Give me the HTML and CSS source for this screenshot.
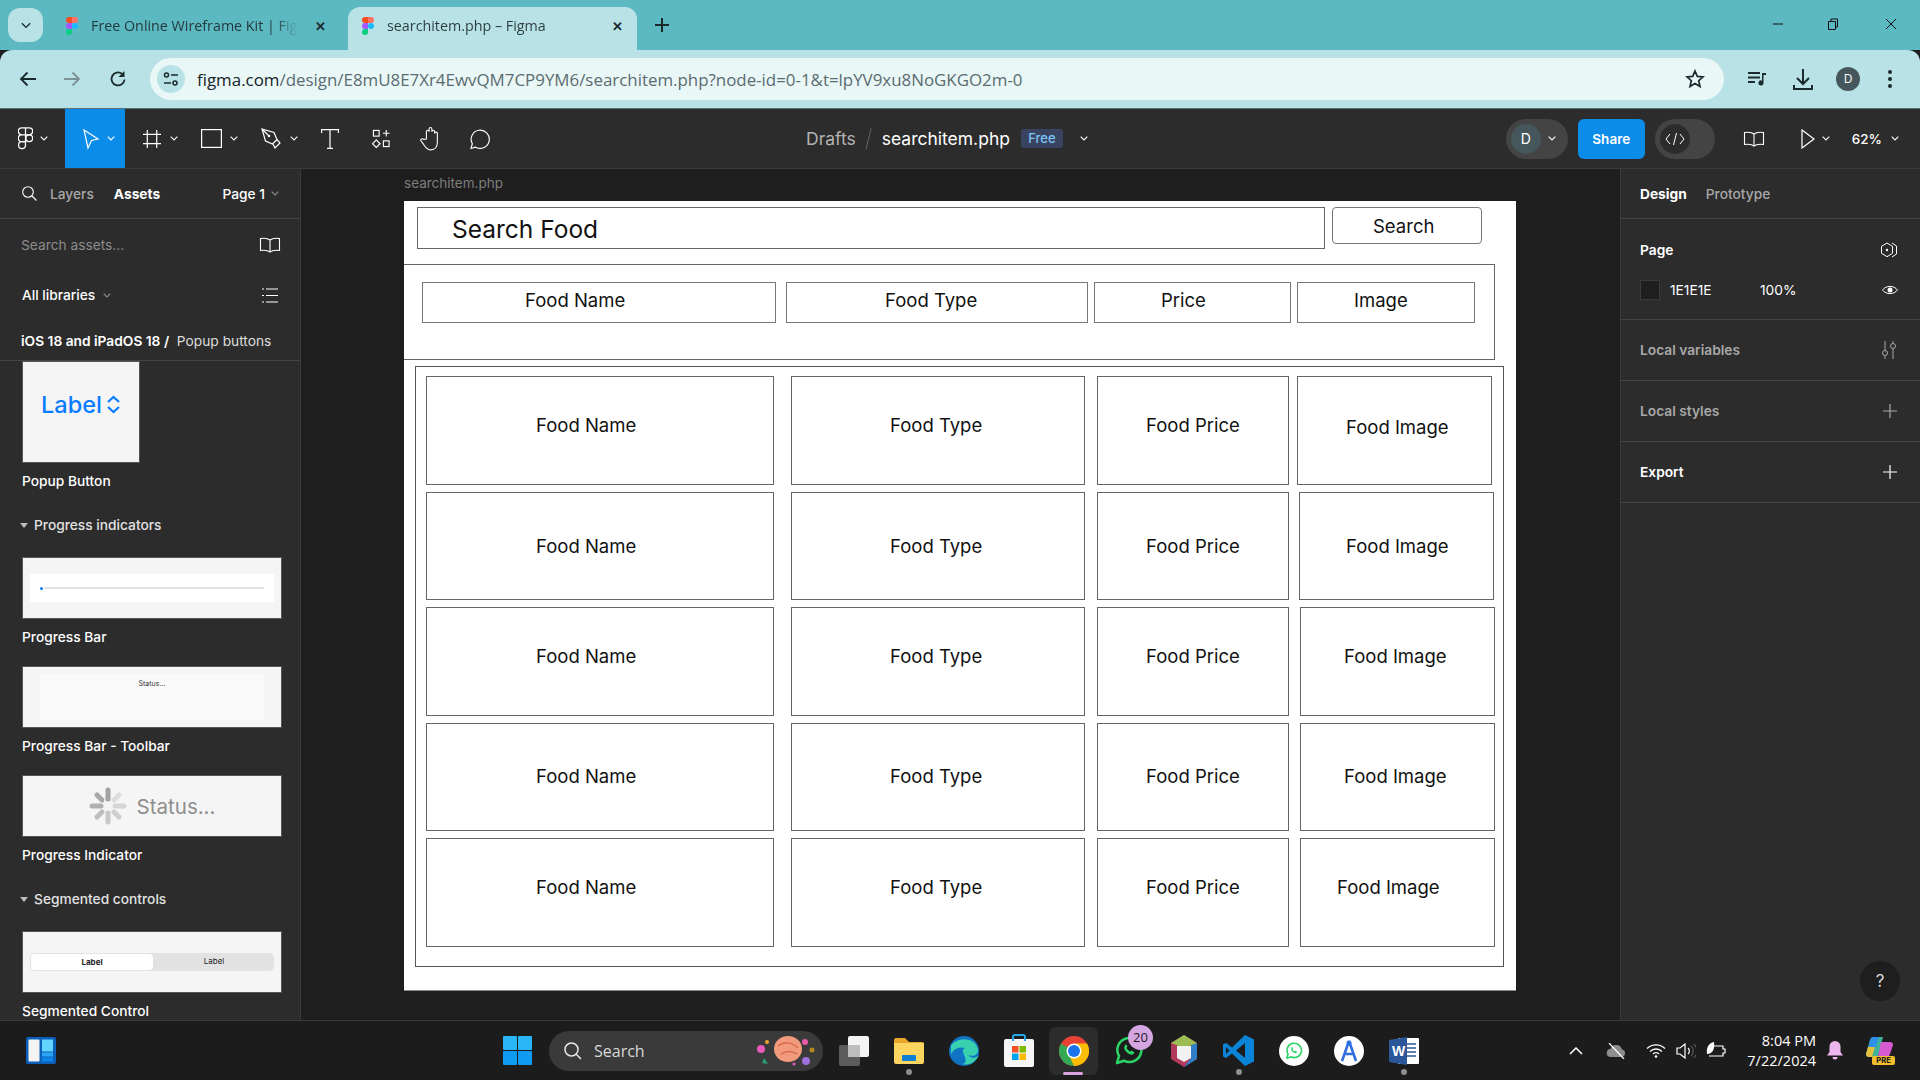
FILE: index.html
```html
<!DOCTYPE html>
<html lang="en">
<head>
    <meta charset="UTF-8">
    <title>searchitem.php – Figma</title>
    <link rel="stylesheet" href="styles.css">
</head>
<body>
    <svg class="sprites" width="0" height="0">
        <symbol id="figma" viewBox="0 0 12 18">
            <path fill="#f24e1e" d="M6 0H3a3 3 0 0 0 0 6h3z"/>
            <path fill="#ff7262" d="M6 0h3a3 3 0 0 1 0 6H6z"/>
            <path fill="#a259ff" d="M6 6H3a3 3 0 0 0 0 6h3z"/>
            <circle fill="#1abcfe" cx="9" cy="9" r="3"/>
            <path fill="#0acf83" d="M6 12H3a3 3 0 1 0 3 3z"/>
        </symbol>
        <symbol id="chev" viewBox="0 0 8 5">
            <path d="M.7.7 4 4 7.3.7" fill="none" stroke="currentColor" stroke-width="1.1"/>
        </symbol>
        <symbol id="book" viewBox="0 0 22 16">
            <path d="M11 3C9 1.3 5.5 1 1.5 1.5v12c4-.5 7.5-.2 9.5 1.500 2-1.700 5.500-2 9.500-1.500v-12C16.500 1 13 1.300 11 3zm0 0v12" fill="none" stroke="currentColor" stroke-width="1.100"/>
        </symbol>
        <symbol id="plus" viewBox="0 0 14 14">
            <path d="M7 0v14M0 7h14" fill="none" stroke="currentColor" stroke-width="1.200"/>
        </symbol>
        <symbol id="wa" viewBox="0 0 30 30">
            <path d="M3 27l2-7a12 12 0 1 1 5 4.700z" fill="none" stroke="currentColor" stroke-width="2.600" stroke-linejoin="round"/>
            <path d="M11 9.500c-1.500 1.500-1 4 1.500 6.500s5.500 3.500 7 2l1-1.500-3-2-1.300 1c-1.500-.5-3-2-3.700-3.700l1-1.300-1.700-2.500z" fill="currentColor"/>
        </symbol>
    </svg>

    <!-- Browser tabs -->
    <div class="tabbar">
        <div class="tab-search">
            <svg width="10" height="7"><use href="#chev"/></svg>
        </div>
        <div class="tab tab-first">
            <svg class="favicon" width="12" height="18"><use href="#figma"/></svg>
            <span class="tab-title tab-fade">Free Online Wireframe Kit | Fig</span>
            <span class="tab-close">✕</span>
        </div>
        <div class="tab tab-active">
            <svg class="favicon" width="12" height="18"><use href="#figma"/></svg>
            <span class="tab-title">searchitem.php – Figma</span>
            <span class="tab-close">✕</span>
        </div>
        <svg class="new-tab" width="14" height="14" viewBox="0 0 14 14"><path d="M7 0v14M0 7h14" stroke="#1b2a2c" stroke-width="2"/></svg>
        <div class="win-controls">
            <svg width="12" height="12" viewBox="0 0 12 12"><path d="M1 6h10" stroke="#111" stroke-width="1"/></svg>
            <svg class="win-restore" width="12" height="12" viewBox="0 0 12 12"><path d="M1.500 3.500h7v8h-7zM4 3.500V1h6.500v8H8.500" fill="none" stroke="#111"/></svg>
            <svg width="12" height="12" viewBox="0 0 12 12"><path d="M1 1l10 10M11 1 1 11" stroke="#111"/></svg>
        </div>
    </div>

    <!-- Address bar -->
    <div class="navbar">
        <svg class="nav-icon" width="18" height="16" viewBox="0 0 18 16"><path d="M17 8H2M8.500 1.500 2 8l6.500 6.500" fill="none" stroke="#1b2a2c" stroke-width="1.800"/></svg>
        <svg class="nav-icon nav-forward" width="18" height="16" viewBox="0 0 18 16"><path d="M1 8h15M9.500 1.500 16 8l-6.500 6.500" fill="none" stroke="#7d9295" stroke-width="1.800"/></svg>
        <svg class="nav-icon nav-reload" width="18" height="18" viewBox="0 0 18 18"><path d="M15.500 9.500A6.500 6.500 0 1 1 13 3.800" fill="none" stroke="#1b2a2c" stroke-width="1.800"/><path d="M15.500 1v6h-6z" fill="#1b2a2c"/></svg>
        <div class="urlbar">
            <span class="site-info">
                <svg width="16" height="16" viewBox="0 0 16 16"><g fill="none" stroke="#1b2a2c" stroke-width="1.500"><circle cx="3.500" cy="4" r="2"/><path d="M8 4h7M1 12h7"/><circle cx="12" cy="12" r="2"/></g></svg>
            </span>
            <span class="url"><span class="url-host">figma.com</span>/design/E8mU8E7Xr4EwvQM7CP9YM6/searchitem.php?node-id=0-1&amp;t=lpYV9xu8NoGKGO2m-0</span>
            <svg class="star" width="20" height="20" viewBox="0 0 20 20"><path d="M10 2l2.300 5.400 5.700.5-4.300 3.800 1.300 5.800-5-3-5 3 1.300-5.800L2 7.900l5.700-.5z" fill="none" stroke="#1b2a2c" stroke-width="1.700"/></svg>
        </div>
        <div class="nav-right">
            <svg width="20" height="18" viewBox="0 0 20 18"><path d="M1 3h12M1 7.500h12M1 12h7" stroke="#1b2a2c" stroke-width="2"/><path d="M15 3h4v2h-2.500v8a2.500 2.500 0 1 1-1.500-2.300z" fill="#1b2a2c"/></svg>
            <svg width="20" height="22" viewBox="0 0 20 22"><path d="M10 1v14M4 10l6 6 6-6M1 17v4h18v-4" fill="none" stroke="#1b2a2c" stroke-width="2"/></svg>
            <span class="chrome-avatar">D</span>
            <svg width="4" height="18" viewBox="0 0 4 18"><g fill="#1b2a2c"><circle cx="2" cy="2" r="2"/><circle cx="2" cy="9" r="2"/><circle cx="2" cy="16" r="2"/></g></svg>
        </div>
    </div>

    <!-- Figma toolbar -->
    <div class="toolbar">
        <div class="tools">
            <div class="tool tool-logo">
                <svg width="15" height="23" viewBox="0 0 12 18"><g fill="none" stroke="#fff" stroke-width="1"><path d="M6 .5H3a2.700 2.700 0 0 0 0 5.500h3zM6 .5h3a2.700 2.700 0 0 1 0 5.500H6zM6 6H3a2.700 2.700 0 0 0 0 5.500h3z"/><circle cx="9" cy="8.800" r="2.700"/><path d="M6 11.500H3A2.800 2.800 0 1 0 6 14.500z"/></g></svg>
                <svg class="caret" width="8" height="5"><use href="#chev"/></svg>
            </div>
            <div class="tool tool-move">
                <svg width="18" height="22" viewBox="0 0 18 22"><path d="M2 2l14 9-6.500 1.500L6 20z" fill="none" stroke="#fff" stroke-width="1.200"/></svg>
                <svg class="caret" width="8" height="5"><use href="#chev"/></svg>
            </div>
            <div class="tool tool-frame">
                <svg width="18" height="18" viewBox="0 0 21 21"><path d="M5 0v21M16 0v21M0 5h21M0 16h21" stroke="#fff" stroke-width="1.400"/></svg>
                <svg class="caret" width="8" height="5"><use href="#chev"/></svg>
            </div>
            <div class="tool tool-rect">
                <svg width="21" height="19" viewBox="0 0 21 19"><rect x=".6" y=".6" width="19.800" height="17.800" fill="none" stroke="#fff" stroke-width="1.200"/></svg>
                <svg class="caret" width="8" height="5"><use href="#chev"/></svg>
            </div>
            <div class="tool tool-pen">
                <svg width="20" height="21" viewBox="0 0 20 21"><path d="M1 1l12 3.500 3 7-4.500 4.500-7-3zM1 1l6.500 6.500M12 16l2 4 5-5-3-3.500" fill="none" stroke="#fff" stroke-width="1.200"/><circle cx="8" cy="8" r="1.300" fill="#fff"/></svg>
                <svg class="caret" width="8" height="5"><use href="#chev"/></svg>
            </div>
            <div class="tool tool-text">
                <svg width="18" height="20" viewBox="0 0 18 20"><path d="M.6 4V.7h16.800V4M9 .7v18.600M6 19.300h6" fill="none" stroke="#fff" stroke-width="1.200"/></svg>
            </div>
            <div class="tool tool-comps">
                <svg width="19" height="19" viewBox="0 0 20 20"><g fill="none" stroke="#fff" stroke-width="1.200"><rect x="1.500" y="1.500" width="6" height="6"/><path d="M15 1v7M11.500 4.500h7"/><path d="M4.500 11.500l4 4-4 4-4-4z"/><rect x="12" y="12.500" width="6" height="6"/></g></svg>
            </div>
            <div class="tool tool-hand">
                <svg width="21" height="25" viewBox="0 0 23 27"><path d="M7 14V6a1.500 1.500 0 0 1 3 0V3a1.500 1.500 0 0 1 3 0v3a1.500 1.500 0 0 1 3 0v2a1.500 1.500 0 0 1 3 0v10c0 5-3 8-7 8-4.500 0-6-3-8-6l-3-4c-1-2 1.500-3 3-1.500z" fill="none" stroke="#fff" stroke-width="1.200"/></svg>
            </div>
            <div class="tool tool-comment">
                <svg width="22" height="22" viewBox="0 0 23 23"><path d="M2 21.500l1.500-5A9.500 9.500 0 1 1 7 20z" fill="none" stroke="#fff" stroke-width="1.200" stroke-linejoin="round"/></svg>
            </div>
        </div>
        <div class="file-title">
            <span class="crumb">Drafts</span>
            <span class="crumb-slash"></span>
            <span class="file-name">searchitem.php</span>
            <span class="badge-free">Free</span>
            <svg class="caret" width="8" height="5"><use href="#chev"/></svg>
        </div>
        <div class="actions">
            <div class="pill pill-user">
                <span class="user-dot">D</span>
                <svg class="caret" width="8" height="5"><use href="#chev"/></svg>
            </div>
            <button class="share">Share</button>
            <div class="pill pill-code">
                <span class="code-dot">
                    <svg width="20" height="12" viewBox="0 0 20 12"><path d="M5 1 1 6l4 5M15 1l4 5-4 5M11.500 0 8.500 12" fill="none" stroke="#fff"/></svg>
                </span>
            </div>
            <svg class="top-book" width="22" height="16"><use href="#book"/></svg>
            <svg class="top-play" width="14" height="20" viewBox="0 0 14 20"><path d="M1 1l12 9-12 9z" fill="none" stroke="#fff" stroke-width="1.200"/></svg>
            <svg class="caret play-caret" width="8" height="5"><use href="#chev"/></svg>
            <span class="zoom-level">62%</span>
            <svg class="caret" width="8" height="5"><use href="#chev"/></svg>
        </div>
    </div>

    <div class="workspace">
        <!-- Assets panel -->
        <aside class="left-panel">
            <div class="panel-tabs">
                <svg class="find" width="15" height="15" viewBox="0 0 15 15"><path d="M6 .7a5.300 5.300 0 1 0 0 10.600A5.300 5.300 0 0 0 6 .7zM10 10l4.500 4.500" fill="none" stroke="#fff" stroke-width="1.100"/></svg>
                <span class="tab-muted">Layers</span>
                <span class="tab-strong">Assets</span>
                <span class="page-pick">Page 1</span>
                <svg class="caret caret-dim" width="8" height="5"><use href="#chev"/></svg>
            </div>
            <div class="asset-search">
                <span>Search assets...</span>
                <svg width="22" height="16"><use href="#book"/></svg>
            </div>
            <div class="lib-row">
                <span>All libraries</span>
                <svg class="caret caret-dim" width="8" height="5"><use href="#chev"/></svg>
                <svg class="list-icon" width="16" height="15" viewBox="0 0 16 15"><path d="M0 1h2M4 1h12M0 7.500h2M4 7.500h12M0 14h2M4 14h12" stroke="#fff" stroke-width="1"/></svg>
            </div>
            <div class="breadcrumb"><b>iOS 18 and iPadOS 18 /</b>&nbsp; Popup buttons</div>
            <div class="asset-list">
                <div class="thumb thumb-popup">
                    <span>Label</span>
                    <svg width="15" height="19" viewBox="0 0 15 19"><path d="M2 7l5.500-5L13 7M2 12l5.500 5 5.500-5" fill="none" stroke="#0a7cff" stroke-width="2.200"/></svg>
                </div>
                <div class="asset-name name-popup">Popup Button</div>
                <div class="group-name">Progress indicators</div>
                <div class="thumb thumb-bar">
                    <div class="bar-inner"><span class="bar-dot"></span><span class="bar-line"></span></div>
                </div>
                <div class="asset-name">Progress Bar</div>
                <div class="thumb thumb-toolbar">
                    <div class="toolbar-inner">Status...</div>
                </div>
                <div class="asset-name">Progress Bar - Toolbar</div>
                <div class="thumb thumb-status">
                    <svg width="38" height="38" viewBox="0 0 38 38">
                        <g stroke-width="5" stroke-linecap="round">
                            <path stroke="#a3a3a3" d="M19 3v9"/>
                            <path stroke="#dcdcdc" d="M30 8l-5 5"/>
                            <path stroke="#d6d6d6" d="M35 19h-9"/>
                            <path stroke="#cfcfcf" d="M30 30l-5-5"/>
                            <path stroke="#c8c8c8" d="M19 35v-9"/>
                            <path stroke="#bdbdbd" d="M8 30l5-5"/>
                            <path stroke="#b0b0b0" d="M3 19h9"/>
                            <path stroke="#a8a8a8" d="M8 8l5 5"/>
                        </g>
                    </svg>
                    <span>Status...</span>
                </div>
                <div class="asset-name">Progress Indicator</div>
                <div class="group-name group-segmented">Segmented controls</div>
                <div class="thumb thumb-segment">
                    <div class="segment-track">
                        <span class="segment-on">Label</span>
                        <span class="segment-off">Label</span>
                    </div>
                </div>
                <div class="asset-name">Segmented Control</div>
            </div>
        </aside>

        <!-- Canvas with the wireframe -->
        <main class="canvas">
            <div class="frame-label">searchitem.php</div>
            <div class="frame">
                <div class="search-row">
                    <div class="search-input">Search Food</div>
                    <div class="search-btn">Search</div>
                </div>
                <div class="head-box">
                    <div class="head-cell head-name">Food Name</div>
                    <div class="head-cell head-type">Food Type</div>
                    <div class="head-cell head-price">Price</div>
                    <div class="head-cell head-image">Image</div>
                </div>
                <div class="grid-box">
                    <div class="food-row row-a">
                        <div class="cell cell-name">Food Name</div>
                        <div class="cell cell-type">Food Type</div>
                        <div class="cell cell-price">Food Price</div>
                        <div class="cell cell-image">Food Image</div>
                    </div>
                    <div class="food-row row-b">
                        <div class="cell cell-name">Food Name</div>
                        <div class="cell cell-type">Food Type</div>
                        <div class="cell cell-price">Food Price</div>
                        <div class="cell cell-image">Food Image</div>
                    </div>
                    <div class="food-row row-c">
                        <div class="cell cell-name">Food Name</div>
                        <div class="cell cell-type">Food Type</div>
                        <div class="cell cell-price">Food Price</div>
                        <div class="cell cell-image">Food Image</div>
                    </div>
                    <div class="food-row row-d">
                        <div class="cell cell-name">Food Name</div>
                        <div class="cell cell-type">Food Type</div>
                        <div class="cell cell-price">Food Price</div>
                        <div class="cell cell-image">Food Image</div>
                    </div>
                    <div class="food-row row-e">
                        <div class="cell cell-name">Food Name</div>
                        <div class="cell cell-type">Food Type</div>
                        <div class="cell cell-price">Food Price</div>
                        <div class="cell cell-image">Food Image</div>
                    </div>
                </div>
            </div>
        </main>

        <!-- Design panel -->
        <aside class="right-panel">
            <div class="panel-tabs right-tabs">
                <span class="tab-strong">Design</span>
                <span class="tab-muted">Prototype</span>
            </div>
            <section class="prop-page">
                <div class="prop-head">
                    <span class="prop-title">Page</span>
                    <svg width="18" height="16" viewBox="0 0 18 16"><path d="M7 1l5.500 3.300v7L7 14.700 1.500 11.300v-7zM12 1l4.500 3v8L12 15" fill="none" stroke="#fff"/><circle cx="7" cy="8" r="1.200" fill="#fff"/></svg>
                </div>
                <div class="fill-row">
                    <span class="swatch"></span>
                    <span class="fill-hex">1E1E1E</span>
                    <span class="fill-pct">100%</span>
                    <svg width="16" height="10" viewBox="0 0 16 10"><path d="M.5 5C4 .2 12 .2 15.500 5 12 9.800 4 9.800.5 5z" fill="none" stroke="#fff"/><circle cx="8" cy="5" r="2.500" fill="#fff"/></svg>
                </div>
            </section>
            <section class="prop-row">
                <span class="prop-title title-dim">Local variables</span>
                <svg class="icon-dim" width="16" height="18" viewBox="0 0 16 18"><g fill="none" stroke="currentColor"><path d="M4 0v9.500M4 15v3M12 0v2M12 8v10"/><circle cx="4" cy="12" r="2.500"/><circle cx="12" cy="5" r="2.500"/></g></svg>
            </section>
            <section class="prop-row">
                <span class="prop-title title-dim">Local styles</span>
                <svg class="icon-dim" width="14" height="14"><use href="#plus"/></svg>
            </section>
            <section class="prop-row">
                <span class="prop-title">Export</span>
                <svg width="14" height="14"><use href="#plus"/></svg>
            </section>
            <div class="help">?</div>
        </aside>
    </div>

    <!-- Windows taskbar -->
    <footer class="taskbar">
        <svg class="widgets" width="30" height="27" viewBox="0 0 30 27"><rect width="30" height="27" rx="2" fill="#0c5fb8"/><rect x="2.500" y="2.500" width="11" height="22" rx="1" fill="#f4f4f4"/><rect x="16" y="2.500" width="11" height="12" fill="#62d2ff"/><rect x="16" y="15.500" width="11" height="4" fill="#2aa6f5"/><rect x="16" y="20.500" width="11" height="4" fill="#0d84ea"/></svg>
        <div class="task-center">
            <svg class="win-logo" width="29" height="29" viewBox="0 0 29 29"><g fill="#29b6f6"><rect width="14" height="14" rx="1"/><rect x="15" width="14" height="14" rx="1"/></g><g fill="#0f9bf0"><rect y="15" width="14" height="14" rx="1"/><rect x="15" y="15" width="14" height="14" rx="1"/></g></svg>
            <div class="task-search">
                <svg width="18" height="18" viewBox="0 0 18 18"><path d="M7.500 1a6.500 6.500 0 1 0 0 13 6.500 6.500 0 0 0 0-13zM12 12l5 5" fill="none" stroke="#e8e8e8" stroke-width="1.500"/></svg>
                <span>Search</span>
                <svg class="brain" width="66" height="34" viewBox="0 0 66 34">
                    <circle cx="7" cy="15" r="4" fill="#e55ab8"/><circle cx="13" cy="8" r="2" fill="#f0a030"/>
                    <path d="M10 24l4 6-6-1z" fill="#2c9c7c"/>
                    <ellipse cx="34" cy="15" rx="14" ry="13" fill="#f19b7c"/><path d="M24 12c6-5 14-4 20 2M27 20c5-3 11-3 16 0" fill="none" stroke="#d8694f" stroke-width="1.500"/>
                    <circle cx="51" cy="8" r="3" fill="#e85aa8"/><circle cx="58" cy="16" r="2.500" fill="#b38a20"/><circle cx="52" cy="27" r="4" fill="#a070e0"/><circle cx="40" cy="30" r="1.500" fill="#e55ab8"/>
                </svg>
            </div>
            <svg class="app app-view" width="30" height="30" viewBox="0 0 30 30"><rect x="9" y="0" width="21" height="21" rx="2" fill="#f4f4f4"/><rect x="0" y="9" width="21" height="21" rx="2" fill="#5c5c5c"/><rect x="9" y="9" width="12" height="12" fill="#bdbdbd"/></svg>
            <div class="app-slot has-dot">
                <svg width="30" height="26" viewBox="0 0 30 26"><path d="M0 2a2 2 0 0 1 2-2h9l4 4h13a2 2 0 0 1 2 2v2H0z" fill="#e8a72a"/><path d="M0 5h30v19a2 2 0 0 1-2 2H2a2 2 0 0 1-2-2z" fill="#fcd660"/><rect x="8" y="17" width="14" height="6" rx="1" fill="#0f7fd6"/></svg>
            </div>
            <div class="app-slot">
                <svg width="30" height="30" viewBox="0 0 30 30"><circle cx="15" cy="15" r="15" fill="#1173c4"/><path d="M2 10C6 2 25-1 29 13c1 6-5 8-10 6 3 3 7 4 11 0-3 7-10 11-16 9C22 24 9 15 16 12 9 10 4 14 2 18z" fill="#39d0b0"/></svg>
            </div>
            <div class="app-slot">
                <svg width="30" height="33" viewBox="0 0 30 33"><rect y="5" width="30" height="28" rx="2" fill="#f6f6f6"/><path d="M9 7V3a2 2 0 0 1 2-2h8a2 2 0 0 1 2 2v4" fill="none" stroke="#25a8e8" stroke-width="2"/><rect x="8" y="12" width="6.500" height="6.500" fill="#f25022"/><rect x="15.500" y="12" width="6.500" height="6.500" fill="#7fba00"/><rect x="8" y="19.500" width="6.500" height="6.500" fill="#00a4ef"/><rect x="15.500" y="19.500" width="6.500" height="6.500" fill="#ffb900"/></svg>
            </div>
            <div class="app-slot app-chrome">
                <svg width="30" height="30" viewBox="0 0 30 30"><circle cx="15" cy="15" r="15" fill="#e94235"/><path d="M15 15 2 7.500A15 15 0 0 0 15 30l7-12z" fill="#34a853"/><path d="M15 15l-7 0L15 30A15 15 0 0 0 28 7.500H15z" fill="#fbbc04"/><circle cx="15" cy="15" r="7.500" fill="#fff"/><circle cx="15" cy="15" r="6" fill="#1a73e8"/></svg>
                <span class="chrome-line"></span>
            </div>
            <div class="app-slot app-wa">
                <svg width="30" height="30" class="wa-green"><use href="#wa"/></svg>
                <span class="wa-badge">20</span>
            </div>
            <div class="app-slot">
                <svg width="26" height="32" viewBox="0 0 26 32"><path d="M13 0 26 8v16l-13 8L0 24V8z" fill="#b23a5a"/><path d="M13 32 26 24V8l-6 2v13z" fill="#2f7fc8"/><path d="M13 0 26 8 13 13 0 8z" fill="#9cbc54"/><path d="M6 11h14v12l-7 4-7-4z" fill="#f2f2f2"/></svg>
            </div>
            <div class="app-slot has-dot">
                <svg width="31" height="31" viewBox="0 0 31 31"><path d="M22 0l9 4.500v22L22 31 9 18.500l-6 4.500-3-1.500v-12L3 8l6 4.500z" fill="#0a84d6"/><path d="M22 8 13 15.500 22 23z" fill="#1c1c1c"/><path d="M3 12v7l3.500-3.500z" fill="#1c1c1c"/></svg>
            </div>
            <div class="app-slot">
                <svg width="30" height="30" viewBox="0 0 30 30"><circle cx="15" cy="15" r="15" fill="#fff"/><svg x="6" y="6" width="18" height="18" class="wa-green"><use href="#wa"/></svg></svg>
            </div>
            <div class="app-slot">
                <svg width="30" height="30" viewBox="0 0 30 30"><circle cx="15" cy="15" r="15" fill="#fff"/><path d="M15 5 8 25M15 5l7 20M10 18h10" fill="none" stroke="#2f6fde" stroke-width="2.600"/><circle cx="15" cy="7" r="2.500" fill="#2f6fde"/></svg>
            </div>
            <div class="app-slot has-dot">
                <svg width="30" height="30" viewBox="0 0 30 30"><rect x="9" y="2" width="21" height="26" rx="1" fill="#fff"/><path d="M18 8h9M18 12h9M18 16h9M18 20h9" stroke="#2b579a" stroke-width="1.500"/><path d="M0 4l18-3v28L0 26z" fill="#2b579a"/><text x="3" y="20" class="word-w">W</text></svg>
            </div>
        </div>
        <div class="tray">
            <svg width="14" height="8" viewBox="0 0 14 8"><path d="M1 7l6-6 6 6" fill="none" stroke="#fff" stroke-width="1.500"/></svg>
            <svg class="tray-cloud" width="20" height="16" viewBox="0 0 20 16"><path d="M5 14a4 4 0 0 1-.5-8A6 6 0 0 1 16 6.500 3.800 3.800 0 0 1 15.500 14z" fill="#8e8e8e"/><path d="M3 0l15 16" stroke="#fff" stroke-width="1.200"/></svg>
            <svg class="tray-wifi" width="20" height="15" viewBox="0 0 20 15"><g fill="none" stroke="#fff" stroke-width="1.300"><path d="M1 5.500a13 13 0 0 1 18 0M4 8.500a8.500 8.500 0 0 1 12 0M7 11a4 4 0 0 1 6 0"/></g><circle cx="10" cy="13.500" r="1.300" fill="#fff"/></svg>
            <svg class="tray-vol" width="20" height="16" viewBox="0 0 20 16"><path d="M1 5h3l5-4v14l-5-4H1z" fill="none" stroke="#fff" stroke-width="1.200"/><path d="M12 5a4 4 0 0 1 0 6" fill="none" stroke="#fff" stroke-width="1.200"/><path d="M15 2.500a8 8 0 0 1 0 11M18 1a10 10 0 0 1 0 14" fill="none" stroke="#666"/></svg>
            <svg class="tray-batt" width="20" height="18" viewBox="0 0 20 18"><path d="M7 4h10v3h2v4h-2v3H3" fill="none" stroke="#fff" stroke-width="1.200"/><path d="M8 0C3 1 0 5 1 12c5 0 8-4 7-12z" fill="#fff"/></svg>
            <div class="clock"><span>8:04 PM</span><span>7/22/2024</span></div>
            <svg class="tray-bell" width="16" height="19" viewBox="0 0 16 19"><path d="M8 0a5.500 5.500 0 0 1 5.500 5.500V11l2.500 3.500H0L2.500 11V5.500A5.500 5.500 0 0 1 8 0z" fill="#edb6ee"/><path d="M5.500 16h5a2.500 2.500 0 0 1-5 0z" fill="#edb6ee"/></svg>
            <div class="copilot">
                <svg width="28" height="20" viewBox="0 0 28 20"><path d="M7 0h10l-5 20H3a3 3 0 0 1-3-3l4-14a4 4 0 0 1 3-3z" fill="#3fb39a"/><path d="M2 12 4 3a4 4 0 0 1 3-3h6L9 12z" fill="#2f8fe8"/><path d="M15 5h9a3 3 0 0 1 3 3l-3 9a4 4 0 0 1-4 3h-8z" fill="#d85ad0"/><path d="M0 17 2 10h7l-3 10H3a3 3 0 0 1-3-3z" fill="#e4c13c"/></svg>
                <span>PRE</span>
            </div>
        </div>
    </footer>
</body>
</html>
```

FILE: styles.css
```css
/* General */
* {
    box-sizing: border-box;
}

html, body {
    margin: 0;
    height: 1080px;
    overflow: hidden;
}

body {
    width: 1920px;
    display: flex;
    flex-direction: column;
    font-family: 'Inter', sans-serif;
    background-color: #1e1e1e;
    color: #fff;
}

.sprites {
    position: absolute;
}

svg {
    flex-shrink: 0;
    display: block;
}

/* Browser tabs */
.tabbar {
    height: 50px;
    display: flex;
    align-items: flex-end;
    background-color: #5cb8c1;
    font-family: 'Open Sans', sans-serif;
    color: #1c2b2e;
}

.tab-search {
    width: 35px;
    height: 34px;
    margin: 0 13px 8px 8px;
    display: flex;
    align-items: center;
    justify-content: center;
    border-radius: 12px;
    background-color: #b8e2e6;
    color: #1b2a2c;
}

.tab {
    height: 43px;
    display: flex;
    align-items: center;
    width: 289px;
    padding: 0 14px 6px 16px;
    font-size: 14.300px;
}

.tab-first {
    padding-left: 10px;
}

.tab-active {
    margin-left: 3px;
    padding-left: 14px;
    border-radius: 12px 12px 0 0;
    background-color: #b8e2e6;
}

.tab-title {
    width: 207px;
    margin-left: 13px;
    white-space: nowrap;
    opacity: 0.9;
}

.tab-fade {
    -webkit-mask-image: linear-gradient(90deg, #000 88%, transparent);
    mask-image: linear-gradient(90deg, #000 88%, transparent);
}

.tab-close {
    margin-left: 17px;
    font-size: 13px;
    font-weight: 700;
}

.tab-active .tab-close {
    margin-left: 19px;
}

.new-tab {
    margin: 0 0 18px 18px;
}

.win-controls {
    margin-left: auto;
    padding: 0 23px 20px 0;
    display: flex;
    gap: 43px;
}

.win-restore {
    margin-right: 3px;
}

/* Address bar */
.navbar {
    height: 58px;
    display: flex;
    align-items: center;
    padding-left: 19px;
    border-radius: 12px 12px 0 0;
    background-color: #b8e2e6;
}

.nav-forward {
    margin-left: 26px;
}

.nav-reload {
    margin-left: 28px;
}

.urlbar {
    width: 1574px;
    height: 42px;
    margin-left: 23px;
    display: flex;
    align-items: center;
    padding: 0 19px 0 7px;
    border-radius: 21px;
    background-color: #eaf7f7;
}

.site-info {
    width: 28px;
    height: 28px;
    display: flex;
    align-items: center;
    justify-content: center;
    border-radius: 50%;
    background-color: #b8e2e6;
}

.url {
    margin-left: 12px;
    font-family: 'Open Sans', sans-serif;
    font-size: 16.900px;
    color: #5a6c70;
    white-space: nowrap;
}

.url-host {
    color: #162427;
}

.star {
    margin-left: auto;
}

.nav-right {
    display: flex;
    align-items: center;
    margin-left: 23px;
    gap: 26px;
}

.chrome-avatar {
    width: 24px;
    height: 24px;
    margin: 0 2px 0 -3px;
    border-radius: 50%;
    background-color: #45575c;
    font-family: 'Open Sans', sans-serif;
    font-size: 12px;
    line-height: 24px;
    text-align: center;
}

/* Figma toolbar */
.toolbar {
    height: 60px;
    display: flex;
    align-items: center;
    border-top: 1px solid #5b7275;
    background-color: #2c2c2c;
}

.tools {
    width: 806px;
    display: flex;
    height: 100%;
    align-items: center;
}

.tool {
    height: 100%;
    display: flex;
    align-items: center;
    gap: 8px;
}

.caret {
    color: #fff;
}

.caret-dim {
    color: #8f8f8f;
}

.tool-logo { width: 65px; padding-left: 18px; gap: 7px; }
.tool-move { width: 60px; padding-left: 17px; gap: 7px; background-color: #0c8ce9; }
.tool-frame { width: 76px; padding-left: 18px; gap: 9px; }
.tool-rect { width: 60px; }
.tool-pen { width: 60px; gap: 9px; }
.tool-text { width: 51px; }
.tool-comps { width: 48px; }
.tool-hand { width: 49px; }
.tool-comment { width: 40px; }

.file-title {
    display: flex;
    align-items: center;
    font-size: 17.500px;
}

.crumb {
    color: #b3b3b3;
}

.crumb-slash {
    width: 1px;
    height: 22px;
    margin: 0 13px 0 12px;
    background-color: #666;
    transform: rotate(14deg);
}

.badge-free {
    margin: 0 17px 0 11px;
    width: 42px;
    height: 19px;
    border-radius: 3px;
    background-color: #394360;
    color: #7cc4f8;
    font-size: 13px;
    font-weight: 500;
    line-height: 19px;
    text-align: center;
}

.actions {
    margin-left: auto;
    display: flex;
    align-items: center;
}

.pill {
    height: 40px;
    border-radius: 20px;
    background-color: #444;
    display: flex;
    align-items: center;
}

.pill-user {
    width: 62px;
    padding-left: 5px;
    gap: 7px;
}

.user-dot {
    width: 30px;
    height: 30px;
    border-radius: 50%;
    background-color: #45575c;
    font-size: 14px;
    line-height: 30px;
    text-align: center;
}

.share {
    width: 67px;
    height: 40px;
    margin-left: 10px;
    border: none;
    border-radius: 6px;
    background-color: #0c8ce9;
    color: #fff;
    font-family: 'Inter', sans-serif;
    font-size: 13.500px;
    font-weight: 600;
}

.pill-code {
    width: 60px;
    margin-left: 10px;
    padding-left: 5px;
}

.code-dot {
    width: 30px;
    height: 30px;
    border-radius: 50%;
    background-color: #2c2c2c;
    display: flex;
    align-items: center;
    justify-content: center;
}

.top-book {
    margin-left: 28px;
}

.top-play {
    margin-left: 36px;
}

.play-caret {
    margin-left: 7px;
}

.zoom-level {
    margin: 0 9px 0 22px;
    font-size: 13.500px;
    font-weight: 500;
}

.actions > .caret:last-child {
    margin-right: 21px;
}

/* Panels */
.workspace {
    height: 852px;
    display: flex;
    border-top: 1px solid #3a3a3a;
}

.left-panel, .right-panel {
    flex-shrink: 0;
    background-color: #2c2c2c;
    font-size: 13.750px;
    overflow: hidden;
}

.left-panel {
    width: 301px;
    border-right: 1px solid #3a3a3a;
}

.right-panel {
    position: relative;
    width: 300px;
    border-left: 1px solid #3a3a3a;
}

.panel-tabs {
    height: 50px;
    display: flex;
    align-items: center;
    padding-left: 22px;
    border-bottom: 1px solid #444;
    font-weight: 500;
}

.find {
    margin-right: 13px;
}

.tab-muted {
    color: #a8a8a8;
}

.tab-strong {
    margin-left: 20px;
    font-weight: 700;
}

.page-pick {
    margin: 0 6px 0 auto;
}

.panel-tabs > .caret-dim {
    margin-right: 21px;
}

.asset-search {
    height: 52px;
    display: flex;
    align-items: center;
    justify-content: space-between;
    padding: 0 19px 0 21px;
    color: #8b8b8b;
}

.asset-search svg {
    color: #fff;
}

.lib-row {
    height: 48px;
    display: flex;
    align-items: center;
    padding: 0 22px 0 22px;
    font-weight: 500;
}

.lib-row .caret-dim {
    margin-left: 8px;
}

.list-icon {
    margin-left: auto;
}

.breadcrumb {
    height: 42px;
    padding: 13px 0 0 21px;
    line-height: 18px;
    border-bottom: 1px solid #444;
    color: #ddd;
    white-space: nowrap;
}

.breadcrumb b {
    font-weight: 600;
    color: #fff;
}

.asset-list {
    padding-left: 22px;
}

.thumb {
    width: 260px;
    height: 62px;
    display: flex;
    align-items: center;
    justify-content: center;
    border: 1px solid #555;
    background-color: #f5f5f5;
}

.asset-name {
    height: 47px;
    padding-top: 9px;
    line-height: 18px;
    font-weight: 500;
}

.group-name {
    height: 41px;
    color: #e2e2e2;
    font-weight: 500;
    line-height: 18px;
}

.group-name::before {
    content: "";
    display: inline-block;
    width: 0;
    height: 0;
    margin: 0 6px 2px -2px;
    border: 4px solid transparent;
    border-top: 5px solid #bbb;
    border-bottom: none;
}

.group-segmented {
    margin-top: 6px;
}

.thumb-popup {
    width: 118px;
    height: 102px;
    padding-bottom: 15px;
    gap: 4px;
    color: #0a7cff;
    font-size: 23.500px;
    font-weight: 500;
}

.name-popup {
    height: 53px;
}

.thumb-bar {
    padding: 16px 7px 16px 7px;
}

.bar-inner {
    width: 100%;
    height: 100%;
    display: flex;
    align-items: center;
    padding: 0 10px;
    gap: 1px;
    background-color: #fff;
}

.bar-dot {
    width: 3px;
    height: 3px;
    border-radius: 50%;
    background-color: #0a7cff;
}

.bar-line {
    flex: 1;
    height: 2px;
    background-color: #e2e2e2;
}

.thumb-toolbar {
    padding: 7px 17px;
}

.toolbar-inner {
    width: 100%;
    height: 100%;
    padding-top: 5px;
    background-color: #fafafa;
    color: #333;
    font-size: 7px;
    text-align: center;
}

.thumb-status {
    gap: 10px;
    color: #8e8e8e;
    font-size: 20.500px;
}

.thumb-segment {
    padding: 0 7px;
}

.segment-track {
    width: 100%;
    height: 18px;
    display: flex;
    border-radius: 5px;
    background-color: #e2e2e2;
    color: #222;
    font-size: 8px;
    line-height: 16px;
    text-align: center;
}

.segment-on {
    width: 122px;
    height: 16px;
    margin: 1px;
    border-radius: 4px;
    background-color: #fff;
    font-weight: 700;
}

.segment-off {
    flex: 1;
}

/* Canvas */
.canvas {
    flex: 1;
    min-width: 0;
    padding: 0 103px;
    background-color: #1e1e1e;
}

.frame-label {
    height: 32px;
    padding-top: 5px;
    color: #7d7d7d;
    font-size: 13.500px;
    line-height: 18px;
}

.frame {
    width: 1112px;
    height: 790px;
    padding-top: 6px;
    background-color: #fff;
    color: #111;
    font-size: 18.500px;
    border-bottom: 1px solid #888;
}

.search-row {
    height: 42px;
    display: flex;
    align-items: flex-start;
    padding-left: 13px;
}

.search-input {
    width: 908px;
    height: 42px;
    padding: 6px 0 0 34px;
    border: 1px solid #666;
    font-size: 24.500px;
    line-height: 30px;
}

.search-btn {
    width: 150px;
    height: 37px;
    margin-left: 7px;
    padding-left: 40px;
    border: 1px solid #777;
    border-radius: 4px;
    line-height: 37px;
}

.head-box {
    width: 1091px;
    height: 96px;
    margin-top: 15px;
    padding: 17px 0 0 18px;
    display: flex;
    align-items: flex-start;
    border: 1px solid #666;
    border-left: none;
}

.head-cell {
    height: 41px;
    padding-top: 5px;
    border: 1px solid #777;
    line-height: 24px;
}

.head-name { width: 354px; padding-left: 102px; }
.head-type { width: 302px; margin-left: 10px; padding-left: 98px; }
.head-price { width: 197px; margin-left: 6px; padding-left: 66px; }
.head-image { width: 178px; margin-left: 6px; padding-left: 56px; }

.grid-box {
    width: 1089px;
    height: 601px;
    margin: 6px 0 0 11px;
    padding: 9px 0 0 10px;
    display: flex;
    flex-direction: column;
    gap: 7px;
    border: 1px solid #555;
}

.food-row {
    height: 108.500px;
    display: flex;
    flex-shrink: 0;
}

.cell {
    height: 100%;
    border: 1px solid #666;
    line-height: 24px;
    white-space: nowrap;
}

.cell-name { width: 348px; padding-left: 109px; }
.cell-type { width: 294px; margin-left: 17px; padding-left: 98px; }
.cell-price { width: 192px; margin-left: 12px; padding-left: 48px; }
.cell-image { width: 195px; }

.row-a .cell { padding-top: 36px; }
.row-b .cell { padding-top: 41px; }
.row-c .cell { padding-top: 36px; }
.row-d .cell { padding-top: 40px; }
.row-e .cell { padding-top: 36px; }

.row-a .cell-image { margin-left: 8px; padding: 38px 0 0 48px; }
.row-b .cell-image { margin-left: 10px; padding-left: 46px; }
.row-c .cell-image { margin-left: 11px; padding-left: 43px; }
.row-d .cell-image { margin-left: 11px; padding-left: 43px; }
.row-e .cell-image { margin-left: 11px; padding-left: 36px; }

/* Design panel */
.right-tabs {
    padding-left: 19px;
}

.right-tabs .tab-strong {
    margin-left: 0;
    margin-right: 19px;
}

.prop-page {
    height: 101px;
    padding: 0 22px 0 19px;
    border-bottom: 1px solid #444;
}

.prop-head {
    height: 61px;
    display: flex;
    align-items: center;
    justify-content: space-between;
}

.prop-title {
    font-weight: 600;
}

.title-dim {
    color: #a8a8a8;
}

.icon-dim {
    color: #a8a8a8;
}

.fill-row {
    height: 20px;
    display: flex;
    align-items: center;
}

.swatch {
    width: 20px;
    height: 20px;
    border: 1px solid #3a3a3a;
    background-color: #1e1e1e;
}

.fill-hex {
    width: 90px;
    margin-left: 10px;
}

.fill-pct {
    margin-right: auto;
}

.prop-row {
    height: 61px;
    display: flex;
    align-items: center;
    justify-content: space-between;
    padding: 0 22px 0 19px;
    border-bottom: 1px solid #444;
}

.prop-row svg {
    margin-right: 1px;
}

.help {
    position: absolute;
    right: 20px;
    bottom: 19px;
    width: 40px;
    height: 40px;
    border-radius: 50%;
    background-color: #1e1e1e;
    color: #ddd;
    font-size: 17px;
    line-height: 40px;
    text-align: center;
}

/* Windows taskbar */
.taskbar {
    height: 60px;
    display: flex;
    align-items: center;
    padding-left: 26px;
    border-top: 1px solid #3a3a3a;
    background-color: #1c1c1c;
}

.task-center {
    display: flex;
    align-items: center;
    margin-left: 447px;
}

.task-search {
    width: 274px;
    height: 40px;
    margin-left: 17px;
    display: flex;
    align-items: center;
    padding-left: 15px;
    border-radius: 20px;
    background-color: #3a3a3a;
    color: #d8d8d8;
    font-family: 'Open Sans', sans-serif;
    font-size: 16px;
}

.task-search span {
    margin-left: 12px;
}

.brain {
    margin-left: auto;
    margin-right: 3px;
}

.app-view {
    margin: 0 12px 0 16px;
}

.app-slot {
    position: relative;
    width: 55px;
    height: 48px;
    display: flex;
    align-items: center;
    justify-content: center;
}

.has-dot::after {
    content: "";
    position: absolute;
    left: 50%;
    bottom: 0;
    width: 6px;
    height: 6px;
    margin-left: -3px;
    border-radius: 50%;
    background-color: #8f8f8f;
}

.app-chrome {
    border-left: 3px solid transparent;
    border-right: 3px solid transparent;
    border-radius: 8px;
    background-color: #2c2c2c;
    background-clip: padding-box;
}

.chrome-line {
    position: absolute;
    left: 14px;
    bottom: 0;
    width: 20px;
    height: 3px;
    border-radius: 2px;
    background-color: #dca3e0;
}

.wa-green {
    color: #2bd366;
}

.wa-badge {
    position: absolute;
    top: -2px;
    left: 27px;
    width: 25px;
    height: 25px;
    border-radius: 50%;
    background-color: #d6a6e2;
    color: #1c1c1c;
    font-family: 'Open Sans', sans-serif;
    font-size: 13px;
    line-height: 25px;
    text-align: center;
}

.word-w {
    fill: #fff;
    font-family: 'Liberation Sans', sans-serif;
    font-size: 14px;
    font-weight: 700;
}

.tray {
    display: flex;
    align-items: center;
    margin-left: auto;
    padding-right: 25px;
}

.tray-cloud { margin-left: 23px; }
.tray-wifi { margin-left: 20px; }
.tray-vol { margin-left: 10px; }
.tray-batt { margin-left: 10px; }

.clock {
    width: 90px;
    display: flex;
    flex-direction: column;
    align-items: flex-end;
    font-family: 'Open Sans', sans-serif;
    font-size: 14.500px;
    line-height: 20px;
}

.tray-bell {
    margin-left: 11px;
}

.copilot {
    position: relative;
    margin-left: 23px;
    width: 29px;
    height: 28px;
}

.copilot span {
    position: absolute;
    left: 6px;
    bottom: 0;
    width: 23px;
    height: 9px;
    border-radius: 2px;
    background-color: #f5bd2c;
    color: #222;
    font-size: 7.500px;
    font-weight: 800;
    line-height: 9px;
    text-align: center;
}
```
